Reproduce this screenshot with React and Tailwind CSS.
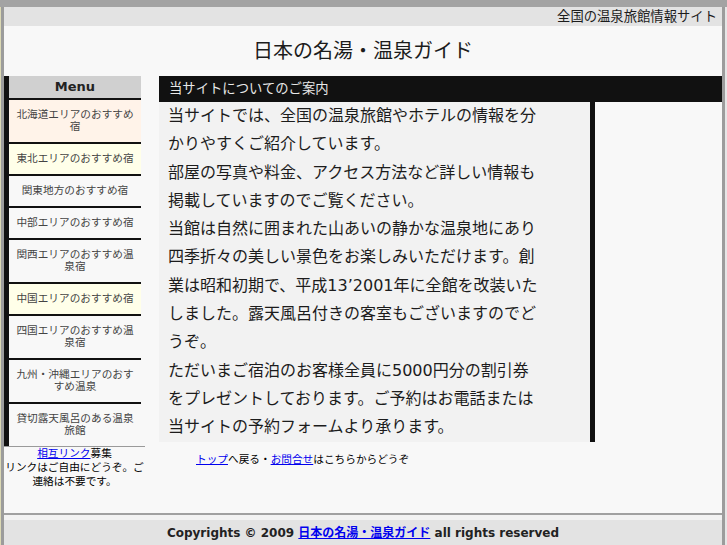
import React from "react";

const menuItems = [
  { label: "北海道エリアのおすすめ宿", bg: "bg-[#fff3e9]" },
  { label: "東北エリアのおすすめ宿", bg: "bg-[#ffffe9]" },
  { label: "関東地方のおすすめ宿", bg: "bg-[#f8f8f8]" },
  { label: "中部エリアのおすすめ宿", bg: "bg-[#f8f8f8]" },
  { label: "関西エリアのおすすめ温泉宿", bg: "bg-[#f8f8f8]" },
  { label: "中国エリアのおすすめ宿", bg: "bg-[#ffffe9]" },
  { label: "四国エリアのおすすめ温泉宿", bg: "bg-[#f8f8f8]" },
  { label: "九州・沖縄エリアのおすすめ温泉", bg: "bg-[#f8f8f8]" },
  { label: "貸切露天風呂のある温泉旅館", bg: "bg-[#f8f8f8]" },
];

const App = () => {
  return (
    <div className="min-h-[545px] bg-[#f8f8f8] font-['DejaVu_Sans','Noto_Sans_CJK_JP',sans-serif] text-[#1c1c1c]">
      {/* top stripe */}
      <div className="h-[7px] bg-[#a3a3a3]"></div>

      <div className="border-l border-r-2 border-l-[#dcd9b4] border-r-[#e6e6e6]">
        <div className="border-l-[3px] border-r-[3px] border-[#9c9c9c]">
          {/* header */}
          <div className="h-[19px] bg-[#e3e3e3] pr-[5px] text-right text-[13.33px] leading-[19px]">
            全国の温泉旅館情報サイト
          </div>
          <h1 className="h-[50px] text-center text-[20px] leading-[50px]">
            日本の名湯・温泉ガイド
          </h1>

          <div className="flex pb-[24px]">
            {/* left column */}
            <div className="w-[141px] shrink-0">
              <div className="w-[137px] border-l-[5px] border-[#111]">
                <div className="h-[24px] border-b-2 border-[#111] bg-[#d0d0d0] text-center text-[13px] font-bold leading-[22px] text-[#222]">
                  Menu
                </div>
                <ul>
                  {menuItems.map((item, i) => (
                    <li
                      key={i}
                      className={`${item.bg} ${
                        i < menuItems.length - 1 ? "border-b-2 border-[#111]" : ""
                      } px-[6px] py-[9px] text-center text-[10.67px] leading-[12px] text-[#444]`}
                    >
                      {item.label}
                    </li>
                  ))}
                </ul>
              </div>
              <div className="border-t border-[#9a9a9a] text-center text-[10.67px] leading-[14px] text-black">
                <a href="#" className="text-[#0000ee] underline">
                  相互リンク
                </a>
                募集
                <br />
                リンクはご自由にどうぞ。ご連絡は不要です。
              </div>
            </div>

            {/* main column */}
            <div className="ml-[14px] flex-1">
              <h2 className="h-[26px] bg-[#111] pl-[10px] text-[13.33px] leading-[26px] text-[#e8e8e8]">
                当サイトについてのご案内
              </h2>
              <div className="flex">
                <div className="w-[436px] border-r-[5px] border-[#111] bg-[#f2f2f2] pl-[9px] text-[16px] leading-[28.3px]">
                  <div className="w-[372px]">
                    <p>当サイトでは、全国の温泉旅館やホテルの情報を分かりやすくご紹介しています。</p>
                    <p>部屋の写真や料金、アクセス方法など詳しい情報も掲載していますのでご覧ください。</p>
                    <p>
                      当館は自然に囲まれた山あいの静かな温泉地にあり四季折々の美しい景色をお楽しみいただけます。創業は昭和初期で、平成13’2001年に全館を改装いたしました。露天風呂付きの客室もございますのでどうぞ。
                    </p>
                    <p>
                      ただいまご宿泊のお客様全員に5000円分の割引券をプレゼントしております。ご予約はお電話または当サイトの予約フォームより承ります。
                    </p>
                  </div>
                </div>
              </div>
              <p className="mt-[11px] ml-[37px] text-[10.67px] leading-[14px] text-black">
                <a href="#" className="text-[#0000ee] underline">
                  トップ
                </a>
                へ戻る・
                <a href="#" className="text-[#0000ee] underline">
                  お問合せ
                </a>
                はこちらからどうぞ
              </p>
            </div>
          </div>

          {/* footer */}
          <div className="border-t-2 border-[#a0a0a0]">
            <div className="h-[5px] bg-[#f2f2f2]"></div>
            <div className="h-[26px] bg-[#e3e3e3] text-center text-[12px] font-bold leading-[26px] text-[#222]">
              Copyrights © 2009{" "}
              <a href="#" className="text-[#0000ee] underline">
                日本の名湯・温泉ガイド
              </a>{" "}
              all rights reserved
            </div>
          </div>
        </div>
      </div>
    </div>
  );
};

export default App;
